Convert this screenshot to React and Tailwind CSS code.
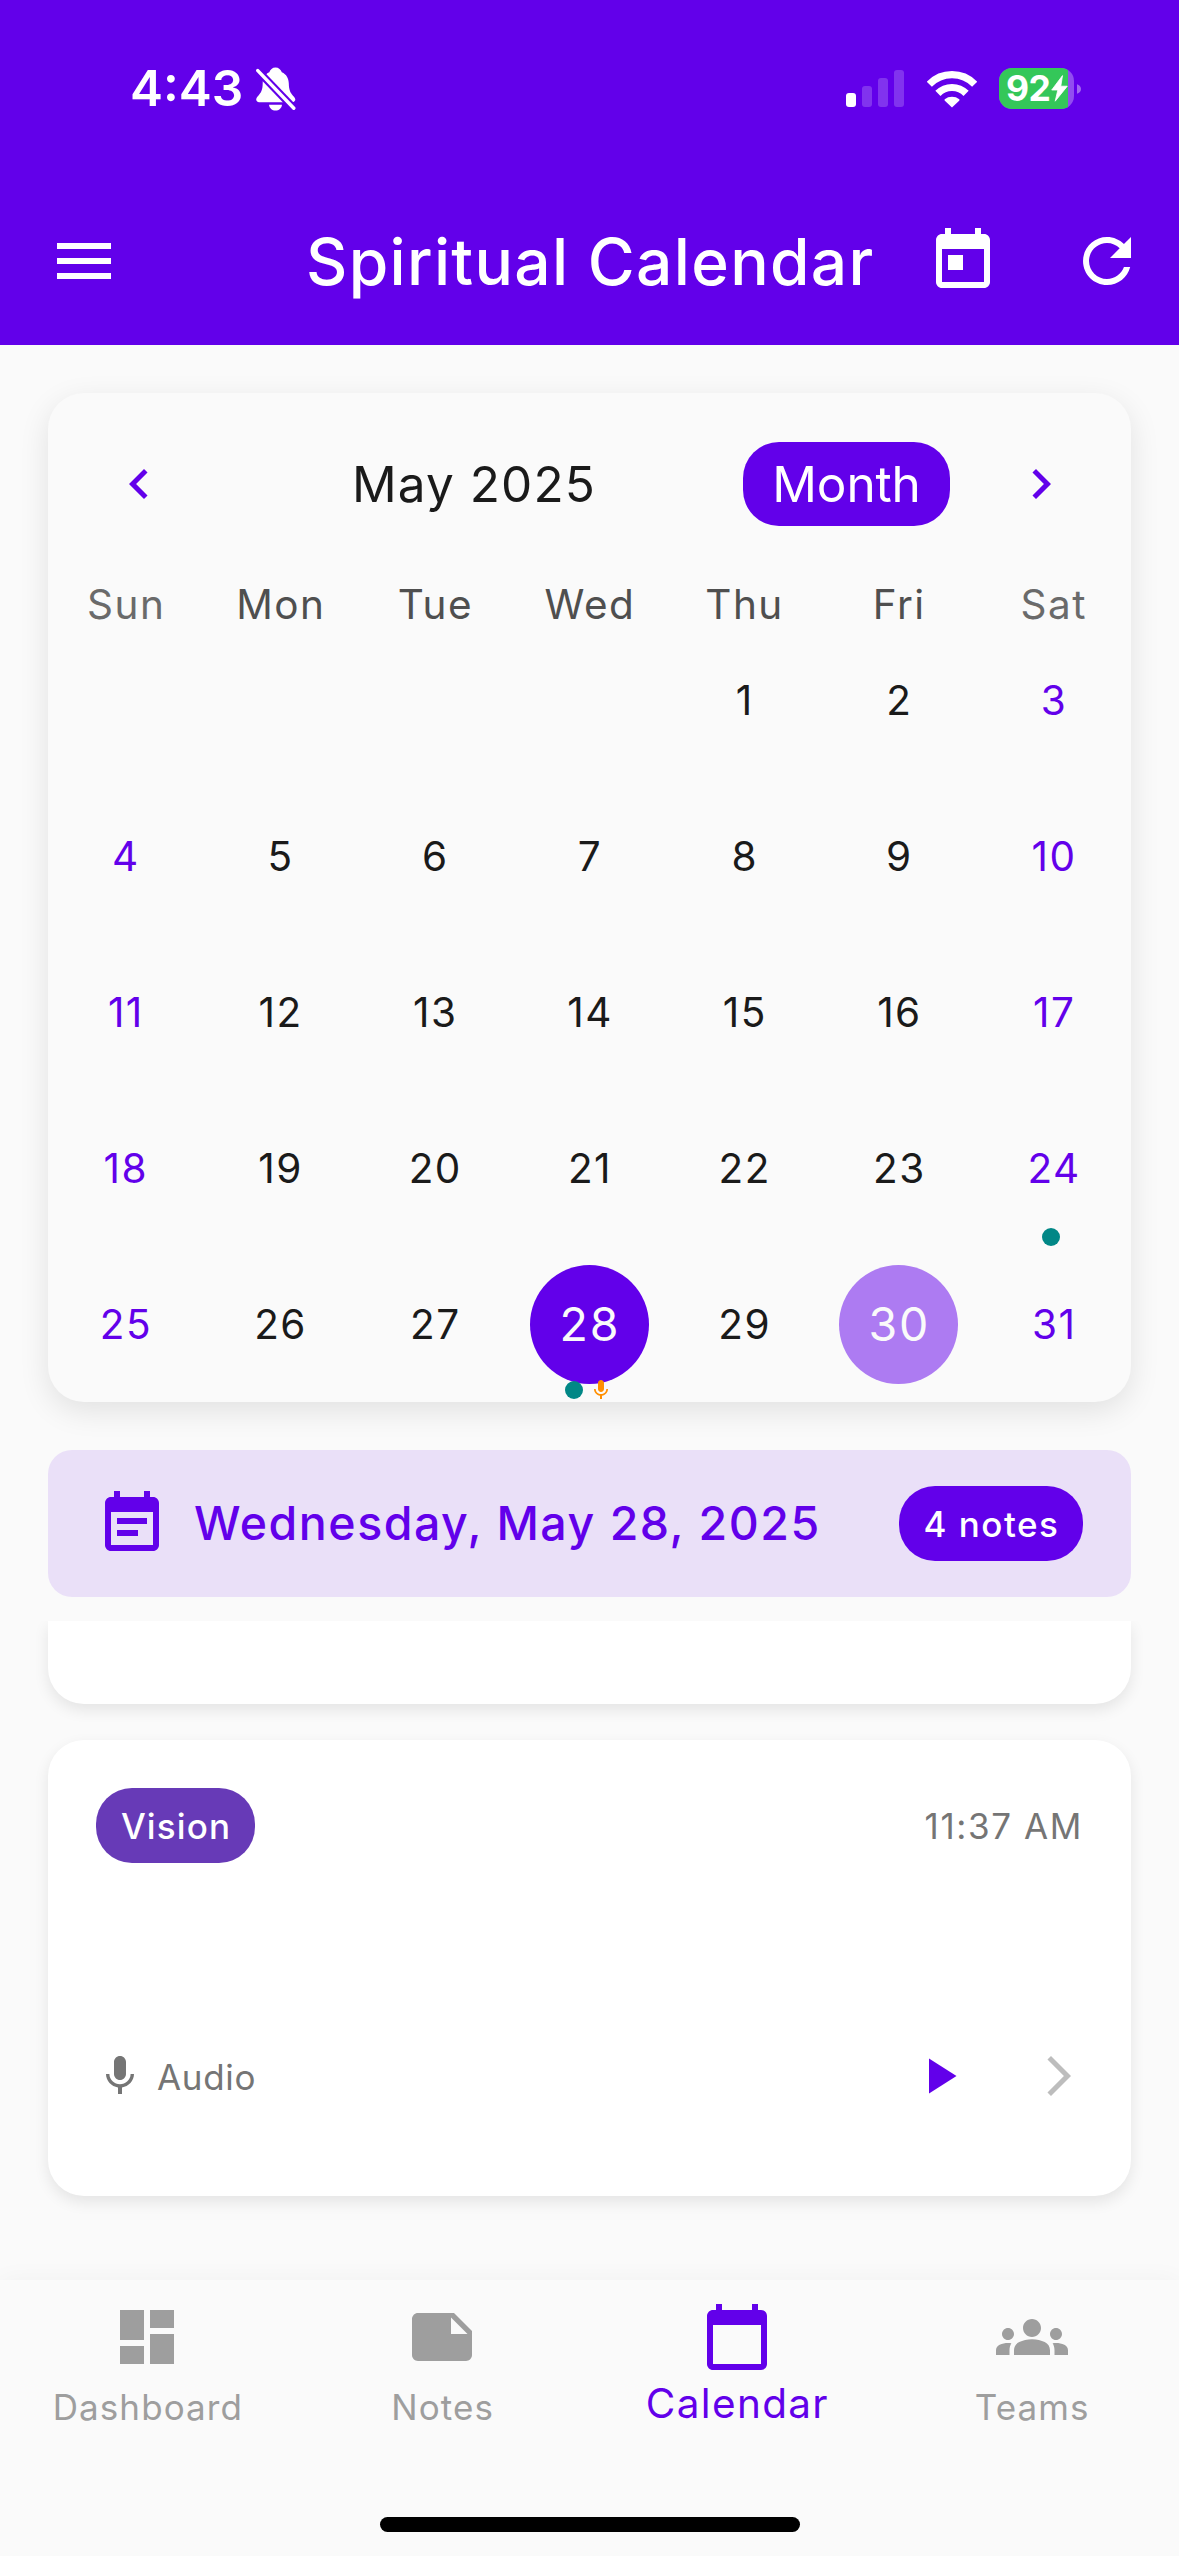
import React from "react";

const PATHS = {
  menu: "M3 18h18v-2H3v2zm0-5h18v-2H3v2zm0-7v2h18V6H3z",
  today: "M19 3h-1V1h-2v2H8V1H6v2H5c-1.11 0-1.99.9-1.99 2L3 19c0 1.1.89 2 2 2h14c1.1 0 2-.9 2-2V5c0-1.1-.9-2-2-2zm0 16H5V8h14v11zM7 10h5v5H7z",
  refresh: "M17.65 6.35C16.2 4.9 14.21 4 12 4c-4.42 0-7.99 3.58-7.99 8s3.57 8 7.99 8c3.73 0 6.84-2.55 7.73-6h-2.08c-.82 2.33-3.04 4-5.65 4-3.31 0-6-2.69-6-6s2.69-6 6-6c1.66 0 3.14.69 4.22 1.78L13 11h7V4l-2.35 2.35z",
  chevronLeft: "M15.41 7.41L14 6l-6 6 6 6 1.41-1.41L10.83 12z",
  chevronRight: "M10 6L8.59 7.41 13.17 12l-4.58 4.59L10 18l6-6z",
  eventNote: "M17 10H7v2h10v-2zm2-7h-1V1h-2v2H8V1H6v2H5c-1.11 0-1.99.9-1.99 2L3 19c0 1.1.89 2 2 2h14c1.1 0 2-.9 2-2V5c0-1.1-.9-2-2-2zm0 16H5V8h14v11zm-5-5H7v2h7v-2z",
  mic: "M12 14c1.66 0 2.99-1.34 2.99-3L15 5c0-1.66-1.34-3-3-3S9 3.34 9 5v6c0 1.66 1.34 3 3 3zm5.3-3c0 3-2.54 5.1-5.3 5.1S6.7 14 6.7 11H5c0 3.41 2.72 6.23 6 6.72V21h2v-3.28c3.28-.48 6-3.3 6-6.72h-1.7z",
  play: "M8 5v14l11-7z",
  forward: "M6.23 20.23L8 22l10-10L8 2 6.23 3.77 14.46 12z",
  dashboard: "M3 13h8V3H3v10zm0 8h8v-6H3v6zm10 0h8V11h-8v10zm0-18v6h8V3h-8z",
  note: "M22 10l-6-6H4c-1.1 0-2 .9-2 2v12.01c0 1.1.9 1.99 2 1.99l16-.01c1.1 0 2-.89 2-1.99v-8zm-7-4.5l5.5 5.5H15V5.5z",
  calendar: "M20 3h-1V1h-2v2H7V1H5v2H4c-1.1 0-2 .9-2 2v16c0 1.1.9 2 2 2h16c1.1 0 2-.9 2-2V5c0-1.1-.9-2-2-2zm0 18H4V8h16v13z",
  groups: "M12 12.75c1.63 0 3.07.39 4.24.9 1.08.48 1.76 1.56 1.76 2.73V18H6v-1.61c0-1.18.68-2.26 1.76-2.73 1.17-.52 2.61-.91 4.24-.91zM4 13c1.1 0 2-.9 2-2s-.9-2-2-2-2 .9-2 2 .9 2 2 2zm1.13 1.1c-.37-.06-.74-.1-1.13-.1-.99 0-1.93.21-2.78.58C.48 14.9 0 15.62 0 16.43V18h4.5v-1.61c0-.83.23-1.61.63-2.29zM20 13c1.1 0 2-.9 2-2s-.9-2-2-2-2 .9-2 2 .9 2 2 2zm4 3.43c0-.81-.48-1.53-1.22-1.85-.85-.37-1.79-.58-2.78-.58-.39 0-.76.04-1.13.1.4.68.63 1.46.63 2.29V18H24v-1.57zM12 6c1.66 0 3 1.34 3 3s-1.34 3-3 3-3-1.34-3-3 1.34-3 3-3z",
};

function Icon({ name, className }) {
  return (
    <svg viewBox="0 0 24 24" fill="currentColor" className={`shrink-0 ${className}`} aria-hidden="true">
      <path d={PATHS[name]} />
    </svg>
  );
}

function MutedBell() {
  return (
    <svg viewBox="0 0 40 44" className="ml-[13px] h-[44px] w-[40px] text-white" fill="currentColor" aria-hidden="true">
      <defs>
        <mask id="bell-slash">
          <rect width="40" height="44" fill="white" />
          <path d="M-3 -1.3L42 45.7" stroke="black" strokeWidth="7.6" />
        </mask>
      </defs>
      <g mask="url(#bell-slash)">
        <path d="M19.500 0.500C16.500 0.500 14 2.600 13.300 5.300C8.600 7.300 6.800 11.500 6.700 16.500C6.600 23 5.200 25.500 2.300 28.700C.9 30.300 .2 31.300 .2 32.600C.2 34.100 1.300 35.200 3.200 35.200H36.200C38.200 35.200 39.300 34.100 39.300 32.600C39.300 31.300 38.400 30.300 37 28.700C34.200 25.500 33 23 32.800 16.500C32.600 11.500 30.500 7.300 25.800 5.300C25.100 2.600 22.500 .5 19.500 .5Z" />
        <path d="M13 37.800H26C25.600 41.300 22.900 43.600 19.500 43.600C16.100 43.600 13.400 41.300 13 37.800Z" />
      </g>
      <path d="M1.800 3.600L37.800 41.200" stroke="currentColor" strokeWidth="3.4" strokeLinecap="round" />
    </svg>
  );
}

function Wifi() {
  return (
    <svg viewBox="0 0 50 38" className="ml-[23px] h-[38px] w-[50px] text-white" fill="none" stroke="currentColor" aria-hidden="true">
      <path d="M2.300 14.300A31.500 31.500 0 0 1 47.700 14.300" strokeWidth="7.200" />
      <path d="M10.900 23.400A19.800 19.800 0 0 1 39.100 23.400" strokeWidth="7.200" />
      <path d="M25 37.600L17.600 30.400A2 2 0 0 1 17.700 29.200A12 12 0 0 1 32.300 29.200A2 2 0 0 1 32.400 30.400Z" fill="currentColor" stroke="none" />
    </svg>
  );
}

function StatusBar() {
  return (
    <div className="flex h-[177px] items-center pl-[130px] pr-[98px]">
      <span className="text-[49.5px] font-semibold leading-none text-white">4:43</span>
      <MutedBell />
      <div className="ml-auto flex h-[37px] items-end gap-[6px]">
        <span className="h-[14px] w-[10px] rounded-[3px] bg-white" />
        <span className="h-[21px] w-[10px] rounded-[3px] bg-white/20" />
        <span className="h-[29px] w-[10px] rounded-[3px] bg-white/20" />
        <span className="h-[37px] w-[10px] rounded-[3px] bg-white/20" />
      </div>
      <Wifi />
      <div className="ml-[22px] flex items-center">
        <div className="relative flex h-[41px] w-[75px] items-center overflow-hidden rounded-[13px] bg-white/30">
          <span className="absolute inset-y-0 left-0 w-[69px] bg-[#34c759]" />
          <span className="relative pl-[7px] text-[35.5px] font-bold leading-none tracking-[-0.6px] text-white">92</span>
          <svg viewBox="0 0 17 27" className="relative ml-px h-[27px] w-[17px] shrink-0" fill="white" stroke="white" strokeWidth="0.8" strokeLinejoin="round" aria-hidden="true">
            <path d="M11.500 .6L.7 15H6.800L4.200 26.200L16.300 11.200H9.800Z" />
          </svg>
        </div>
        <svg viewBox="0 0 5 12" className="ml-[3px] h-[12px] w-[4px]" fill="white" fillOpacity="0.4" aria-hidden="true">
          <path d="M0 0C3 1 5 3 5 6S3 11 0 12Z" />
        </svg>
      </div>
    </div>
  );
}

function AppBar() {
  return (
    <div className="flex h-[168px] items-center pl-[48px] pr-[36px] text-white">
      <Icon name="menu" className="size-[72px]" />
      <h1 className="ml-[186px] whitespace-nowrap pt-[2px] text-[64px] font-medium leading-none tracking-[1.33px]">Spiritual Calendar</h1>
      <Icon name="today" className="ml-auto size-[72px]" />
      <Icon name="refresh" className="ml-[72px] size-[72px]" />
    </div>
  );
}

const WEEKDAYS = ["Sun", "Mon", "Tue", "Wed", "Thu", "Fri", "Sat"];
const CELLS = [...Array(4).fill(null), ...Array.from({ length: 31 }, (_, i) => i + 1)];

function Day({ day, weekend }) {
  if (!day) return <div className="h-[156px]" />;
  if (day === 28)
    return (
      <div className="relative flex h-[156px] items-center justify-center">
        <span className="flex size-[119px] items-center justify-center rounded-full bg-[#6200ea] pl-px text-[46.5px] leading-none tracking-[2px] text-[#fafafa]">28</span>
        <span className="absolute inset-x-0 bottom-0 flex items-center justify-center">
          <span className="mr-[6px] size-[18px] rounded-full bg-[#018786]" />
          <Icon name="mic" className="size-[24px] text-[#ff8f00]" />
        </span>
      </div>
    );
  if (day === 30)
    return (
      <div className="flex h-[156px] items-center justify-center">
        <span className="flex size-[119px] items-center justify-center rounded-full bg-[#ad7bf2] pl-px text-[46.5px] leading-none tracking-[2px] text-[#fafafa]">30</span>
      </div>
    );
  return (
    <div className={`relative flex h-[156px] items-center justify-center pl-px pt-[2px] text-[40.5px] leading-none tracking-[1.5px] ${weekend ? "text-[#6200ea]" : "text-[#1a1a1a]"}`}>
      {day}
      {day === 24 && (
        <span className="absolute inset-x-0 bottom-0 flex justify-center">
          <span className="mr-[6px] size-[18px] rounded-full bg-[#018786]" />
        </span>
      )}
    </div>
  );
}

function CalendarCard() {
  return (
    <section className="mx-[48px] mt-[48px] h-[1009px] rounded-[36px] bg-[#fafafa] pt-[48px] shadow-[0_9px_30px_rgba(0,0,0,0.1)]">
      <div className="flex h-[85px] items-center pl-[61px] pr-[60.5px]">
        <Icon name="chevronLeft" className="size-[60px] text-[#6200ea]" />
        <h2 className="ml-[183px] whitespace-nowrap pt-[2px] text-[49.5px] leading-none tracking-[1.08px] text-[#1a1a1a]">May 2025</h2>
        <button className="ml-auto mr-[60.5px] flex h-[84px] w-[207px] items-center justify-center rounded-[36px] bg-[#6200ea] pt-[2px] text-[49.5px] leading-none tracking-[-0.1px] text-white">Month</button>
        <Icon name="chevronRight" className="size-[60px] text-[#6200ea]" />
      </div>
      <div className="mt-[59px] mb-[2px] grid h-[35px] grid-cols-7 items-center pl-px text-center text-[40.5px] leading-none tracking-[1.5px]">
        {WEEKDAYS.map((d, i) => (
          <span key={d} className={i % 6 === 0 ? "text-[#6a6a6a]" : "text-[#4f4f4f]"}>{d}</span>
        ))}
      </div>
      <div className="grid grid-cols-7">
        {CELLS.map((d, i) => (
          <Day key={i} day={d} weekend={i % 7 === 0 || i % 7 === 6} />
        ))}
      </div>
    </section>
  );
}

function DateBar() {
  return (
    <div className="mx-[48px] mt-[48px] flex h-[147px] items-center rounded-[24px] bg-[#eae0f8] px-[48px]">
      <Icon name="eventNote" className="size-[72px] text-[#6200ea]" />
      <span className="ml-[26px] whitespace-nowrap text-[46.5px] font-medium leading-none tracking-[1.5px] text-[#6200ea]">Wednesday, May 28, 2025</span>
      <span className="ml-auto flex h-[75px] w-[184px] items-center justify-center rounded-[36px] bg-[#6200ea] pl-px pt-[2px] text-[35px] font-medium leading-none tracking-[1.48px] text-white">4 notes</span>
    </div>
  );
}

function NoteCard() {
  return (
    <article className="mx-[48px] mt-[36px] flex h-[456px] flex-col rounded-[36px] bg-white p-[48px] shadow-[0_6px_15px_rgba(0,0,0,0.09)]">
      <div className="flex h-[75px] items-center justify-between">
        <span className="flex h-[75px] w-[159px] items-center justify-center rounded-[36px] bg-[#673ab7] pl-px pt-[2px] text-[35px] font-medium leading-none tracking-[1.1px] text-white">Vision</span>
        <span className="pt-[2px] text-[35px] leading-none tracking-[1.6px] text-[#757575]">11:37 AM</span>
      </div>
      <div className="mt-[183px] flex h-[60px] items-center">
        <Icon name="mic" className="size-[48px] text-[#757575]" />
        <span className="ml-[13px] pt-[2px] text-[35px] leading-none tracking-[0.7px] text-[#757575]">Audio</span>
        <Icon name="play" className="ml-auto size-[60px] text-[#6200ea]" />
        <Icon name="forward" className="ml-[66px] size-[48px] text-[#bdbdbd]" />
      </div>
    </article>
  );
}

const TABS = [
  { label: "Dashboard", icon: "dashboard" },
  { label: "Notes", icon: "note" },
  { label: "Calendar", icon: "calendar", active: true },
  { label: "Teams", icon: "groups" },
];

function BottomNav() {
  return (
    <nav className="relative flex h-[276px] flex-col items-center bg-[#fafafa] shadow-[0_0_24px_rgba(0,0,0,0.04)]">
      <div className="grid w-full grid-cols-4 pt-[21px]">
        {TABS.map((t) => (
          <div key={t.label} className={`flex flex-col items-center ${t.active ? "text-[#6200ea]" : "text-[#9e9e9e]"}`}>
            <Icon name={t.icon} className="size-[72px]" />
            <span className={t.active ? "mt-[7px] pl-px text-[40.5px] leading-[48px] tracking-[1.33px]" : "mt-[10px] pl-px text-[35px] leading-[48px] tracking-[1.1px]"}>{t.label}</span>
          </div>
        ))}
      </div>
      <div className="mt-auto mb-[24px] h-[15px] w-[420px] rounded-full bg-black" />
    </nav>
  );
}

export default function App() {
  return (
    <div className="flex h-[2556px] w-[1179px] flex-col overflow-hidden bg-[#fafafa] font-['Inter',sans-serif]">
      <header className="h-[345px] shrink-0 bg-[#6200ea]">
        <StatusBar />
        <AppBar />
      </header>
      <CalendarCard />
      <DateBar />
      <main className="mt-[24px] h-[659px] overflow-hidden">
        <div className="mx-[48px] h-[83px] rounded-b-[36px] bg-white shadow-[0_6px_15px_rgba(0,0,0,0.09)]" />
        <NoteCard />
      </main>
      <BottomNav />
    </div>
  );
}
